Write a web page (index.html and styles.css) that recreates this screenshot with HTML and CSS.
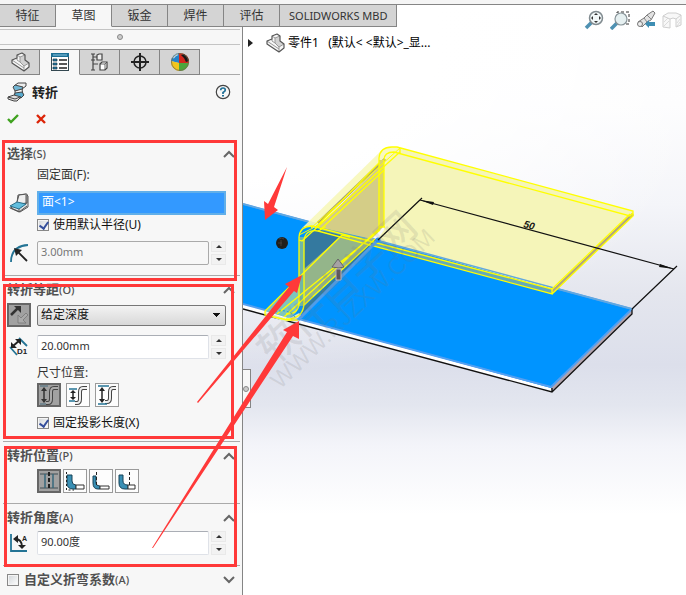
FILE: index.html
```html
<!DOCTYPE html>
<html lang="zh-CN">

<head>
  <meta charset="UTF-8" />
  <meta name="viewport" content="width=device-width, initial-scale=1">
  <title>转折 - SOLIDWORKS</title>
  <link rel="stylesheet" href="styles.css">
</head>

<body>

  <div class="app">
    <div class="ribbon-edge"></div>

    <div class="workspace">
      <div class="side">
        <nav class="tabs">
          <button class="tab">特征</button>
          <button class="tab active">草图</button>
          <button class="tab">钣金</button>
          <button class="tab">焊件</button>
          <button class="tab">评估</button>
          <button class="tab tab-wide">SOLIDWORKS MBD</button>
        </nav>

        <div class="grip"><span class="dot"></span></div>

        <!-- Manager tabs -->
        <div class="manager-tabs">
          <button class="manager-tab" aria-label="设计树">
            <svg width="20" height="20" viewBox="0 0 20 20" stroke-linejoin="round">
              <path d="M2 8l5-2V3l5-2 3 2v5l4 3v4l-5 4L2 11z" fill="#f6f6f6" />
              <path d="M10 5l5-2v5l4 3-5 3-4-4z" fill="#d2d2d2" />
              <path d="M7 3l3 2 5-2M10 5v5l4 4 5-3M14 14v5M7 6v2l3 2M2 8l12 8" fill="none" stroke="#999" />
              <path d="M2 8l5-2V3l5-2 3 2v5l4 3v4l-5 4L2 11z" fill="none" stroke="#555" stroke-width="1.200" />
            </svg>
          </button>
          <button class="manager-tab active" aria-label="属性">
            <svg width="20" height="20" viewBox="0 0 20 20">
              <rect x="1.500" y="1.500" width="17" height="17" fill="#fff" stroke="#334750" />
              <path d="M1 1h18v4H1z" fill="#1c6f95" />
              <path d="M3 3h14" stroke="#8dc6df" />
              <path d="M3 7h4v2H3zM3 11h4v2H3zM3 15h4v2H3z" fill="#1f7fae" stroke="#1d3440" stroke-width=".7" />
              <path d="M9 8h8M9 12h8M9 16h8" stroke="#222" stroke-width="1.300" />
            </svg>
          </button>
          <button class="manager-tab" aria-label="配置">
            <svg width="20" height="20" viewBox="0 0 20 20" fill="none" stroke="#444" stroke-width="1.200">
              <path d="M3 2v16M3 5h4M3 12h5" />
              <path d="M1 2h4M1 8h4M1 18h4" />
              <path d="M7 3l2-1h3v6H7z" fill="#eee" />
              <path d="M10 12l2-2h5v6l-2 2h-5z" fill="#fff" />
              <path d="M10 12h5v6M15 12l2-2" stroke-width=".8" />
            </svg>
          </button>
          <button class="manager-tab" aria-label="尺寸">
            <svg width="20" height="20" viewBox="0 0 20 20" fill="none" stroke="#222">
              <circle cx="10" cy="10" r="6" stroke-width="1.500" />
              <path d="M10 1v18M1 10h18" stroke-width="2" />
            </svg>
          </button>
          <button class="manager-tab" aria-label="外观">
            <svg width="20" height="20" viewBox="0 0 20 20">
              <path d="M9 11L1 9A9 9 0 0 1 9 1z" fill="#2583c8" />
              <path d="M9 11V1a9 9 0 0 1 10 10z" fill="#d3281e" />
              <path d="M9 11h10a9 9 0 0 1-10 8z" fill="#4ca63c" />
              <path d="M9 11v8a9 9 0 0 1-8-10z" fill="#f2c51b" />
              <path d="M11 3l3-1q4 2 5 7l-3 1q-1-4-5-7z" fill="#181818" />
              <path d="M3 6q2-3 5-4" stroke="#b9e2fa" stroke-width="2" fill="none" />
              <circle cx="10" cy="10" r="8.500" fill="none" stroke="#766c4a" stroke-width=".8" />
            </svg>
          </button>
        </div>

        <div class="feature-title">
          <svg width="20" height="20" viewBox="0 0 20 20" stroke="#454545" stroke-linejoin="round">
            <path d="M7 4l4-3h8v3l-4 3z" fill="#eee" />
            <path d="M6 5l2-2 8 2-1 3-7 1z" fill="#72b6d4" />
            <path d="M8 9l7-2 1 6-8 1z" fill="#f4f4f4" />
            <path d="M8 11l7-1 2 3-3 3-7-1z" fill="#57aace" />
            <path d="M1 15l6-2 7 2-4 4H7l-6-2z" fill="#dedede" />
            <path d="M1 15l7 2 5-2" fill="none" />
          </svg>
          <h1>转折</h1>
          <button class="plain" aria-label="帮助">
            <svg width="16" height="16" viewBox="0 0 16 16" fill="none">
              <circle cx="8" cy="8" r="6.700" stroke="#444" stroke-width="1.200" />
              <path d="M5.700 6.300Q5.700 4 8 4t2.300 2.100Q10.300 7.500 8 8.500V10" stroke="#1f6f96" stroke-width="1.700" />
              <path d="M7 11h2v1.500H7z" fill="#1f6f96" />
            </svg>
          </button>
        </div>

        <div class="confirm-row">
          <button class="plain" aria-label="确定">
            <svg width="12" height="12" viewBox="0 0 12 12"><path d="M1 6l3 3 7-7" fill="none" stroke="#3fa21f" stroke-width="2.400" /></svg>
          </button>
          <button class="plain" aria-label="取消">
            <svg width="12" height="12" viewBox="0 0 12 12"><path d="M2 2l8 8M10 2l-8 8" stroke="#dc2408" stroke-width="2.400" /></svg>
          </button>
        </div>

        <!-- Selection -->
        <section class="group first">
          <div class="group-head">
            <h2>选择<span>(S)</span></h2>
            <button class="plain chevron" aria-label="折叠"><svg width="12" height="8" viewBox="0 0 12 8"><path d="M1 7l5-5 5 5" /></svg></button>
          </div>
          <label class="caption" for="fixed-face">固定面(F):</label>
          <div class="row row-face">
            <svg width="20" height="20" viewBox="0 0 20 20" stroke="#555" stroke-linejoin="round">
              <path d="M9 2l8-1 2 2v11l-8 5-9-4 6-5z" fill="#e2e2e2" />
              <path d="M8 9l2-7 8-1v9l-8 1z" fill="#efefef" />
              <path d="M1 13l7-4 9 2-7 5z" fill="#61bede" stroke="#2a6d88" />
              <path d="M1 14v1l9 4 8-6M10 16v3M17 2v9" fill="none" />
            </svg>
            <input class="face-list" id="fixed-face" value="面&lt;1&gt;" readonly>
          </div>
          <label class="check"><input type="checkbox" checked>使用默认半径(U)</label>
          <div class="row">
            <svg width="20" height="20" viewBox="0 0 20 20" fill="none">
              <path d="M2 19Q2 3 19 2" stroke="#247495" stroke-width="1.800" />
              <path d="M18 18L8 8" stroke="#222" stroke-width="1.800" />
              <path d="M5 5l8 2-6 6z" fill="#222" />
            </svg>
            <div class="spin">
              <input class="textbox" aria-label="半径" value="3.00mm" disabled>
              <div class="spin-buttons"><button aria-label="增加"></button><button aria-label="减少"></button></div>
            </div>
          </div>
        </section>

        <!-- Offset -->
        <section class="group offset">
          <div class="group-head">
            <h2>转折等距<span>(O)</span></h2>
            <button class="plain chevron" aria-label="折叠"><svg width="12" height="8" viewBox="0 0 12 8"><path d="M1 7l5-5 5 5" /></svg></button>
          </div>
          <div class="row">
            <button class="tool pressed" aria-label="反向">
              <svg width="20" height="20" viewBox="0 0 20 20">
                <path d="M2 10l7-7" stroke="#333" stroke-width="2.500" />
                <path d="M5 1h7v7z" fill="#333" />
                <path d="M17 8l2 2-5 5 3 3H9v-8l3 3z" fill="#aaa" stroke="#777" stroke-width=".8" />
              </svg>
            </button>
            <select class="depth" aria-label="终止条件">
              <option>给定深度</option>
            </select>
          </div>
          <div class="row row-distance">
            <svg width="20" height="20" viewBox="0 0 20 20" fill="none">
              <path d="M1 10l7 8M10 1l8 8" stroke="#247495" stroke-width="1.800" />
              <path d="M4 9l7-6" stroke="#222" stroke-width="2" />
              <path d="M2 11V5l6 6zM12 2v6L6 2z" fill="#222" />
              <text x="8" y="17" class="icon-text">D1</text>
            </svg>
            <div class="spin">
              <input class="textbox" aria-label="等距距离" value="20.00mm">
              <div class="spin-buttons"><button aria-label="增加"></button><button aria-label="减少"></button></div>
            </div>
          </div>
          <div class="caption">尺寸位置:</div>
          <div class="tools tools-dim">
            <button class="tool pressed" aria-label="外部等距">
              <svg width="20" height="20" viewBox="0 0 20 20" fill="none">
                <path d="M7 18h2q3 0 3-4V7q0-4 3-4h4" stroke="#444" stroke-width="4" />
                <path d="M7 18h2q3 0 3-4V7q0-4 3-4h4" stroke="#aaa" stroke-width="2" />
                <path d="M1 1h8M1 19h6" stroke="#456b7c" />
                <path d="M5 3v14" stroke="#333" stroke-width="1.500" />
                <path d="M2 6l3-4 3 4zM2 14l3 4 3-4z" fill="#333" />
              </svg>
            </button>
            <button class="tool" aria-label="内部等距">
              <svg width="20" height="20" viewBox="0 0 20 20" fill="none">
                <path d="M7 18h2q3 0 3-4V7q0-4 3-4h4" stroke="#444" stroke-width="4" />
                <path d="M7 18h2q3 0 3-4V7q0-4 3-4h4" stroke="#eee" stroke-width="2" />
                <path d="M1 4h8M1 16h6" stroke="#247495" stroke-width="1.500" />
                <path d="M5 6v8" stroke="#222" stroke-width="1.500" />
                <path d="M2 8l3-3 3 3zM2 12l3 3 3-3z" fill="#222" />
              </svg>
            </button>
            <button class="tool" aria-label="总尺寸">
              <svg width="20" height="20" viewBox="0 0 20 20" fill="none">
                <path d="M8 17h2q3 0 3-4V7q0-4 3-4h3" stroke="#444" stroke-width="4" />
                <path d="M8 17h2q3 0 3-4V7q0-4 3-4h3" stroke="#eee" stroke-width="2" />
                <path d="M1 1h11M1 19h9" stroke="#247495" stroke-width="1.500" />
                <path d="M5 4v12" stroke="#222" stroke-width="1.500" />
                <path d="M2 6l3-4 3 4zM2 14l3 4 3-4z" fill="#222" />
              </svg>
            </button>
          </div>
          <label class="check"><input type="checkbox" checked>固定投影长度(X)</label>
        </section>

        <!-- Position -->
        <section class="group">
          <div class="group-head">
            <h2>转折位置<span>(P)</span></h2>
            <button class="plain chevron" aria-label="折叠"><svg width="12" height="8" viewBox="0 0 12 8"><path d="M1 7l5-5 5 5" /></svg></button>
          </div>
          <div class="tools">
            <button class="tool pressed" aria-label="折弯中心线">
              <svg width="20" height="20" viewBox="0 0 20 20" fill="none" stroke="#414f55">
                <path d="M1 3h18M1 17h18" />
                <path d="M6 3v14M14 3v14" stroke="#37687c" stroke-width="1.500" />
                <path d="M10 1v18" stroke="#222" stroke-width="2" stroke-dasharray="4 2" />
              </svg>
            </button>
            <button class="tool" aria-label="材料在内">
              <svg width="20" height="20" viewBox="0 0 20 20">
                <path d="M2 4h5v6q0 4 4 4v4H8q-6 0-6-6z" fill="#398fb4" stroke="#174257" />
                <path d="M11 14h8v4h-8z" fill="#fff" stroke="#333" />
                <path d="M1.500 1v18H9" fill="none" stroke="#222" stroke-dasharray="2 2" />
              </svg>
            </button>
            <button class="tool" aria-label="材料在外">
              <svg width="20" height="20" viewBox="0 0 20 20">
                <path d="M2 5h3v7q0 3 4 3v3H7q-5 0-5-6z" fill="#398fb4" stroke="#174257" />
                <path d="M9 15h9v3H9z" fill="#fff" stroke="#333" />
                <path d="M5.500 1v14" stroke="#222" stroke-dasharray="3 2" />
              </svg>
            </button>
            <button class="tool" aria-label="折弯在外">
              <svg width="20" height="20" viewBox="0 0 20 20">
                <path d="M2 4h4v6q0 4 5 4v4H8q-6 0-6-6z" fill="#398fb4" stroke="#174257" />
                <path d="M11 14h7v4h-7z" fill="#fff" stroke="#333" />
                <path d="M12.500 1v13" stroke="#222" stroke-dasharray="3 2" />
              </svg>
            </button>
          </div>
        </section>

        <!-- Angle -->
        <section class="group">
          <div class="group-head">
            <h2>转折角度<span>(A)</span></h2>
            <button class="plain chevron" aria-label="折叠"><svg width="12" height="8" viewBox="0 0 12 8"><path d="M1 7l5-5 5 5" /></svg></button>
          </div>
          <div class="row">
            <svg width="20" height="20" viewBox="0 0 20 20" fill="none">
              <path d="M2 1v17h16" stroke="#247495" stroke-width="1.800" />
              <path d="M6 6q7 0 7 8" stroke="#222" stroke-width="1.800" />
              <path d="M4 6l5-4v8zM9 12h8l-4 4z" fill="#222" />
              <text x="13" y="8" class="icon-text icon-text-small">A</text>
            </svg>
            <div class="spin">
              <input class="textbox" aria-label="角度" value="90.00度">
              <div class="spin-buttons"><button aria-label="增加"></button><button aria-label="减少"></button></div>
            </div>
          </div>
        </section>

        <section class="group">
          <div class="group-head">
            <label class="check check-head"><input type="checkbox"><b>自定义折弯系数<span>(A)</span></b></label>
            <button class="plain chevron" aria-label="展开"><svg width="12" height="8" viewBox="0 0 12 8"><path d="M1 1l5 5 5-5" /></svg></button>
          </div>
        </section>
      </div>

      <main class="viewport">
        <!-- 3D scene -->
        <svg class="scene" width="443" height="590" viewBox="243 5 443 590">
          <!-- base plate -->
          <path d="M243 304L551 388V392L243 309z" fill="#fff" />
          <path d="M551 388L632 309V314L552 392z" fill="#b0a2ac" />
          <path d="M243 204L632 309L551 388L243 304z" fill="#0094ff" />
          <path d="M243 204L632 309L551 387L243 304" fill="none" stroke="#549ff0" stroke-width="2" />
          <path d="M243 309L552 392L632 314V309M552 388v4" fill="none" stroke="#111" stroke-width="1.300" />

          <!-- preview of the jog -->
          <path d="M397 147L633 211V216L552 294V289L377 240L384 230V160z" fill="#f5f5b9" />
          <path d="M320 226L552 289V294L320 231z" fill="#65aab8" />
          <path d="M243 204L632 309" stroke="#62a9de" stroke-width="1.500" />
          <path d="M301 229L383 149Q388 145 400 148L384 164L314 228Q305 225 301 229z" fill="#f7f7ba" fill-opacity=".9" />
          <path d="M318 227L384 162V226L372 239z" fill="#d4cd87" />
          <path d="M318 223L385 159" stroke="#a49e77" stroke-width="3" />
          <path d="M304 239L316 229L345 236L304 274z" fill="#34799f" />
          <path d="M304 269L342 235L374 239L304 306z" fill="#94b58a" />
          <path d="M304 307L374 240L380 238L301 317z" fill="#337ba0" />
          <path d="M265 311L299 279V304Q298 315 288 318z" fill="#7dc5bd" />
          <path d="M265 312L288 319L299 313L303 317L285 322L266 315z" fill="#dee9cf" />
          <path d="M299 237H304V306H299z" fill="#70b6a6" />
          <path d="M379 160h5v67h-5z" fill="#ddd56a" />
          <path d="M633 214L552 292" stroke="#b3a87c" stroke-width="3" />

          <g fill="none" stroke="#ffff00" stroke-width="1.300">
            <path d="M299 303V237Q300 226 312 226L552 289V294L318 231Q305 229 304 241V304" />
            <path d="M379 229V158Q380 147 392 147H397L633 211V216L552 294" />
            <path d="M384 227V160Q384 152 394 152L630 216L633 213M400 148V153" />
            <path d="M630 214L552 289M299 240L302 241L400 152M315 228L379 163M320 230L384 170" />
            <path d="M318 231L326 227M299 235L313 228M400 148L311 228" stroke-width="1" />
            <path d="M265 311L342 235M277 314L380 230M284 317L382 226M304 305L375 239" />
            <path d="M265 311V315L287 320H298M299 303Q299 314 286 314M304 304Q303 319 286 319M342 235l8 2M379 227h6" />
          </g>
          <path d="M275 312Q288 308 295 317" fill="none" stroke="#279cd4" stroke-dasharray="2 2" />
          <path d="M298 320L378 240" stroke="#509de9" stroke-width="3" />
          <circle cx="378" cy="240" r="2.500" fill="#268ff6" />

          <!-- dimension -->
          <path d="M378 240L422 198M420 200L674 269M632 309L677 266" fill="none" stroke="#111" stroke-width="1.200" />
          <path d="M420 200L434 202L433 205zM674 269L660 264L659 267z" fill="#111" />
          <text class="dimension" transform="translate(523 227) rotate(15)">50</text>

          <!-- handles -->
          <circle cx="282" cy="243" r="6" fill="#211f1c" />
          <path d="M279 239q3-2 5 0M278 243h4M281 240v6" fill="none" stroke="#4c4842" stroke-width=".8" />
          <path d="M338 259L344 267Q340 269 332 267z" fill="#a6a2a4" stroke="#666" />
          <path d="M336 269h5v11h-5z" fill="#5d555a" stroke="#c1bbc0" />

          <g class="watermark">
            <text class="watermark-name" transform="translate(337 288) rotate(-43)" y="14">软件自学网</text>
            <text class="watermark-url" transform="translate(352 308) rotate(-44)" y="9">WWW.RJZXW.COM</text>
          </g>
        </svg>

        <div class="hud">
          <button class="plain" aria-label="整屏显示全图">
            <svg width="20" height="20" viewBox="0 0 20 20">
              <path d="M2 18l7-7" stroke="#4f91b2" stroke-width="3.500" />
              <circle cx="12" cy="8" r="6.500" fill="#f1f7f8" stroke="#818b90" stroke-width="1.500" />
              <path d="M12 3l2 2h-4zM12 13l-2-2h4zM7 8l2-2v4zM17 8l-2-2v4z" fill="#333" />
            </svg>
          </button>
          <button class="plain" aria-label="局部放大">
            <svg width="20" height="20" viewBox="0 0 20 20">
              <path d="M7 8V2h12v12h-5" fill="none" stroke="#333" stroke-dasharray="3 2" />
              <path d="M1 19l7-7" stroke="#4f91b2" stroke-width="3.500" />
              <circle cx="11" cy="9" r="6" fill="#e6f0f1" stroke="#879398" stroke-width="1.200" />
            </svg>
          </button>
          <button class="plain" aria-label="上一视图">
            <svg width="20" height="20" viewBox="0 0 20 20">
              <path d="M2 12l6-4 3-3 6-4 2 2-4 7-4 2-5 5z" fill="#e2e2e2" stroke="#777" />
              <path d="M8 8l3 4M11 5l4 4" stroke="#888" />
              <circle cx="4" cy="14" r="2.500" fill="#eee" stroke="#777" />
              <path d="M9 14l4-4v2h6v4h-6v2z" fill="#3e8eb3" />
            </svg>
          </button>
          <button class="plain faded" aria-label="剖面视图">
            <svg width="20" height="20" viewBox="0 0 20 20" fill="#eee" stroke="#888">
              <path d="M1 6l5-3h8l5 2v10l-5 2V9q-3-2-6 0v9l-7-1z" />
              <path d="M1 6l7 3M14 9l5-4" fill="none" />
              <path d="M2 12l4-4M2 16l5-5M15 13l3-4M15 16l3-4" stroke-width=".7" />
            </svg>
          </button>
        </div>

        <div class="tree">
          <span class="tree-arrow"></span>
          <svg width="20" height="20" viewBox="0 0 20 20" stroke-linejoin="round">
            <path d="M2 8l5-2V3l5-2 3 2v5l4 3v4l-5 4L2 11z" fill="#f6f6f6" />
            <path d="M10 5l5-2v5l4 3-5 3-4-4z" fill="#d2d2d2" />
            <path d="M7 3l3 2 5-2M10 5v5l4 4 5-3M14 14v5M7 6v2l3 2M2 8l12 8" fill="none" stroke="#999" />
            <path d="M2 8l5-2V3l5-2 3 2v5l4 3v4l-5 4L2 11z" fill="none" stroke="#555" stroke-width="1.200" />
          </svg>
          <span class="tree-text">零件1&nbsp;&nbsp; (默认&lt; &lt;默认&gt;_显...</span>
        </div>

        <div class="splitter"><span class="dot"></span></div>
      </main>
    </div>

    <!-- Markup drawn over the panel and the scene -->
    <svg class="markup" width="686" height="595" viewBox="0 0 686 595">
      <g fill="none" stroke="#ff3939" stroke-width="3">
        <rect x="3.500" y="141.500" width="232" height="138" />
        <rect x="4.500" y="285.500" width="228" height="152" />
        <rect x="5.500" y="447.500" width="230" height="118" />
      </g>
      <g fill="#ff3939">
        <path d="M287 167L268 204L264 201L265 220L278 210L274 207z" />
        <path d="M197 402L289 287L285 284L302 275L297 293L294 291L198 403z" />
        <path d="M152 548L287 332L283 330L299 321L299 339L293 336L153 548z" />
      </g>
    </svg>
  </div>

</body>

</html>
```

FILE: styles.css
```css
* {
  box-sizing: border-box;
}

body {
  margin: 0;
  font-family: "Noto Sans", "Noto Sans CJK SC", sans-serif;
  font-size: 12px;
  line-height: 16px;
  color: #333;
  background: #f7f7f7;
}

button,
input,
select {
  font: inherit;
  color: inherit;
  margin: 0;
}

svg {
  display: block;
  flex: none;
}

h1,
h2 {
  margin: 0;
}

.app {
  position: relative;
  display: flex;
  flex-direction: column;
  min-height: 100vh;
  overflow: hidden;
}

.ribbon-edge {
  height: 5px;
  background: #f5f5f5;
  border-bottom: 1px solid #858585;
}

.workspace {
  display: flex;
  flex: 1;
}

/* side panel */
.side {
  position: relative;
  z-index: 1;
  width: 243px;
  flex: none;
  background: #f7f7f7;
  border-right: 1px solid #858585;
}

.tabs {
  display: flex;
  width: max-content;
  height: 22px;
}

.tab {
  width: 56px;
  padding: 0;
  border: solid #858585;
  border-width: 0 1px 1px 0;
  background: #d4d4d4;
}

.tab.active {
  background: #f7f7f7;
  border-bottom-color: #f7f7f7;
}

.tab-wide {
  width: auto;
  padding: 0 9px;
  font-size: 11px;
}

.grip {
  display: flex;
  align-items: center;
  justify-content: center;
  height: 16px;
  margin: 2px 2px 4px 0;
  border: solid #c4c4c4;
  border-width: 1px 0;
}

.dot {
  width: 6px;
  height: 6px;
  border: 1px solid #888;
  border-radius: 50%;
  background: #ccc;
}

.manager-tabs {
  display: flex;
  height: 26px;
  margin-right: 2px;
  box-shadow: inset 0 -1px #aaa;
}

.manager-tab {
  display: flex;
  align-items: center;
  justify-content: center;
  width: 40px;
  padding: 0;
  border: 1px solid #858585;
  border-left: 0;
  background: #d4d4d4;
}

.manager-tab.active {
  background: #f7f7f7;
  border-bottom-color: #f7f7f7;
}

.plain {
  display: flex;
  align-items: center;
  justify-content: center;
  padding: 0;
  border: none;
  background: none;
}

.feature-title {
  display: flex;
  align-items: center;
  height: 33px;
  padding: 0 11px 0 7px;
  gap: 5px;
}

.feature-title h1 {
  flex: 1;
  font-size: 13px;
  color: #222;
}

.confirm-row {
  display: flex;
  gap: 16px;
  height: 22px;
  margin-bottom: 10px;
  padding-left: 7px;
}

.group {
  margin: 0 2px 0 3px;
  padding: 0 14px 10px 4px;
  border-top: 1px solid #aaa;
}

.group.first {
  border-top: none;
}

.group.offset {
  padding-bottom: 8px;
}

.group-head {
  display: flex;
  align-items: center;
  justify-content: space-between;
  height: 27px;
  margin-right: -9px;
}

.group-head h2 {
  font-size: 13px;
  font-weight: bold;
  color: #505050;
}

.group-head span {
  font-size: 11px;
  font-weight: 500;
}

.chevron svg {
  fill: none;
  stroke: #666;
  stroke-width: 2;
}

.caption {
  display: block;
  padding-left: 30px;
}

.row {
  display: grid;
  grid-template-columns: 24px 1fr;
  gap: 6px;
  align-items: center;
  height: 24px;
}

.row > svg {
  justify-self: center;
}

.row-face {
  margin-top: 8px;
}

.row-distance {
  margin: 8px 0 6px;
}

.face-list {
  width: 100%;
  height: 24px;
  padding: 0 3px 4px;
  border: 2px solid #61afe9;
  background: #3399ff;
  color: #fff;
  outline: none;
}

.check {
  display: flex;
  align-items: center;
  gap: 4px;
  height: 20px;
  padding-left: 30px;
  color: #111;
}

.group.first .check {
  margin-bottom: 6px;
}

.check input {
  appearance: none;
  width: 12px;
  height: 12px;
  border: 1px solid #888;
  background: linear-gradient(135deg, #d0d4d8, #fff);
  box-shadow: inset 0 0 0 1px #f4f4f4;
}

.check input:checked::before {
  content: "";
  display: block;
  width: 4px;
  height: 7px;
  margin: 0 3px;
  border: solid #354f9c;
  border-width: 0 2px 2px 0;
  transform: rotate(35deg);
}

.check-head {
  gap: 5px;
  padding-left: 0;
  font-size: 13px;
  color: #505050;
}

.spin {
  display: flex;
  gap: 2px;
}

.textbox {
  flex: 1;
  min-width: 0;
  height: 24px;
  padding: 0 3px 4px;
  border: 1px solid #dfe2e8;
  border-top-color: #aaaeb5;
  border-radius: 2px;
  background: #fff;
  font-size: 11px;
}

.textbox:disabled {
  border-color: #aaa;
  background: #f7f7f7;
  color: #777;
}

.spin-buttons {
  display: flex;
  flex-direction: column;
  justify-content: space-between;
  width: 15px;
}

.spin-buttons button {
  display: flex;
  align-items: center;
  justify-content: center;
  height: 11px;
  padding: 0;
  border: 1px solid #e9e9e9;
  background: #f2f2f2;
}

.spin-buttons button::before {
  content: "";
  border: 3px solid transparent;
  border-top-width: 0;
  border-bottom-color: #333;
}

.spin-buttons button:last-child::before {
  border-top: 3px solid #333;
  border-bottom-width: 0;
}

.depth {
  width: 100%;
  height: 21px;
  padding: 0 3px;
  appearance: none;
  border: 1px solid #777;
  border-radius: 2px;
  color: #111;
  background:
    linear-gradient(to bottom right, #111 50%, transparent 50%) right 4px center / 4px 4px no-repeat,
    linear-gradient(to bottom left, #111 50%, transparent 50%) right 8px center / 4px 4px no-repeat,
    linear-gradient(#f3f3f3, #d8d8d8);
}

.tools {
  display: flex;
  gap: 2px;
  padding-left: 30px;
}

.tools-dim {
  gap: 5px;
  margin: 2px 0 6px;
}

.tool {
  display: flex;
  align-items: center;
  justify-content: center;
  width: 24px;
  height: 24px;
  padding: 0;
  border: 1px solid #9a9a9a;
  background: #fdfdfd;
}

.tool.pressed {
  border: 2px solid #666;
  background: #a1a1a1;
}

.icon-text {
  font: bold 8px "Liberation Sans", sans-serif;
  fill: #222;
}

.icon-text-small {
  font-size: 7px;
}

/* viewport */
.viewport {
  position: relative;
  flex: 1;
  min-width: 0;
  background:
    radial-gradient(ellipse 480px 330px at 0 40px, #fff 40%, rgba(255, 255, 255, 0) 100%),
    linear-gradient(#fff 0, #fdfdfe 100px, #f4f5f9 200px, #e4e6ee 290px, #dcdfeb 360px, #e3e6ef 400px, #f3f4f9 440px, #fff 510px);
}

.scene {
  position: absolute;
  left: 0;
  top: 0;
}

.dimension {
  font: italic bold 10px "Liberation Sans", sans-serif;
  fill: #111;
}

.watermark {
  fill: #777;
  fill-opacity: 0.16;
  text-anchor: middle;
}

.watermark-name {
  font: 500 40px "Noto Sans CJK SC", sans-serif;
}

.watermark-url {
  font: 24px "Liberation Sans", sans-serif;
}

.hud {
  position: relative;
  display: flex;
  justify-content: flex-end;
  gap: 6px;
  padding: 5px 4px 0 0;
}

.faded {
  opacity: 0.4;
}

.tree {
  position: relative;
  display: flex;
  align-items: center;
  padding: 3px 0 0 5px;
  color: #000;
}

.tree-arrow {
  border: 4px solid transparent;
  border-left: 5px solid #222;
  border-right: 0;
  margin-right: 12px;
}

.tree-text {
  margin-left: 3px;
}

.splitter {
  position: absolute;
  left: 0;
  top: 364px;
  display: flex;
  align-items: center;
  width: 8px;
  height: 39px;
  border: 1px solid #858585;
  border-left: 0;
  background: #f7f7f7;
}

.markup {
  position: absolute;
  left: 0;
  top: 0;
  z-index: 2;
  pointer-events: none;
}
```
